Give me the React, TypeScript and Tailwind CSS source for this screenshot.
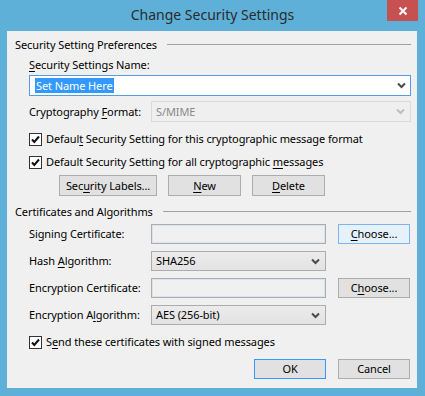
import type { ReactNode } from "react";

const font = { fontFamily: '"Noto Sans", "Segoe UI", sans-serif' };

function U({ children }: { children: ReactNode }) {
  return <span className="underline underline-offset-2">{children}</span>;
}

function Chevron({ disabled }: { disabled?: boolean }) {
  return (
    <svg width="9" height="7" viewBox="0 0 9 7" className="shrink-0">
      <path
        d="M1 1.5 L4.5 5 L8 1.5"
        fill="none"
        stroke={disabled ? "#bdbdbd" : "#4a4a4a"}
        strokeWidth="2"
      />
    </svg>
  );
}

function CheckBox() {
  return (
    <span className="flex h-[13px] w-[13px] shrink-0 items-center justify-center border border-[#333] bg-white">
      <svg width="11" height="11" viewBox="0 0 11 11">
        <path d="M2 5.5 L4.3 8 L9 2.5" fill="none" stroke="#111" strokeWidth="2" />
      </svg>
    </span>
  );
}

function Btn({ children, w, variant }: { children: ReactNode; w: string; variant?: "hot" | "default" }) {
  const look =
    variant === "hot"
      ? "border-[#7eb4ea] bg-[#e5f1fb]"
      : variant === "default"
        ? "border-[#3399ff] bg-[#e1e1e1]"
        : "border-[#adadad] bg-[#e1e1e1]";
  return (
    <div className={`flex h-full items-center justify-center whitespace-nowrap border text-black ${look} ${w}`}>
      {children}
    </div>
  );
}

function GroupHead({ title }: { title: string }) {
  return (
    <div className="flex h-4 items-center pl-2 pr-[6px]">
      <span className="shrink-0 whitespace-nowrap text-black">{title}</span>
      <div className="ml-[10px] mt-[-2px] h-px flex-1 bg-[#a0a0a0]" />
    </div>
  );
}

function Field({ label, children }: { label: ReactNode; children: ReactNode }) {
  return (
    <div className="flex h-full items-center">
      <span className="w-[122px] shrink-0 whitespace-nowrap text-black">{label}</span>
      {children}
    </div>
  );
}

function TextBox() {
  return <div className="h-full w-[175px] border border-[#adadad] bg-[#f0f0f0] shadow-[inset_0_0_0_1px_#d6e3f0]" />;
}

function Combo({ value }: { value: string }) {
  return (
    <div className="flex h-full w-[175px] items-center justify-between border border-[#acacac] bg-gradient-to-b from-[#ececec] to-[#e3e3e3] pl-[4px] pr-[5px] text-black">
      <span>{value}</span>
      <Chevron />
    </div>
  );
}

export default function App() {
  return (
    <div
      className="flex h-[396px] w-[425px] flex-col bg-[#5fb0d8] text-[11px] leading-4 tracking-[-0.1px]"
      style={font}
    >
      {/* title bar */}
      <div className="relative flex h-[31px] shrink-0 items-center justify-center">
        <span className="mt-[-1px] text-[14px] tracking-normal text-[#2b2b2b]">Change Security Settings</span>
        <div className="absolute right-[7px] top-0 flex h-[21px] w-[31px] items-center justify-center bg-[#c75050]">
          <svg width="10" height="10" viewBox="0 0 10 10">
            <path d="M1.5 1.5 L8.5 8.5 M8.5 1.5 L1.5 8.5" stroke="#fff" strokeWidth="2" />
          </svg>
        </div>
      </div>

      {/* client area */}
      <div className="mb-[8px] ml-[7px] mr-[8px] flex flex-1 flex-col bg-[#f0f0f0] pt-[6px]">
        <GroupHead title="Security Setting Preferences" />

        <div className="mt-1 h-4 pl-[22px] text-black">
          <U>S</U>ecurity Settings Name:
        </div>

        <div className="ml-[22px] mr-[6px] mt-[2px] flex h-[21px] items-center justify-between border border-[#569de5] bg-white pl-[5px] pr-[4px]">
          <span className="bg-[#3399ff] px-px leading-[15px] text-white">Set Name Here</span>
          <Chevron />
        </div>

        <div className="mt-[5px] h-[21px] pl-[22px] pr-[6px]">
          <Field
            label={
              <>
                Cryptography <U>F</U>ormat:
              </>
            }
          >
            <div className="flex h-full flex-1 items-center justify-between border border-[#d9d9d9] bg-[#efefef] pl-[4px] pr-[5px] text-[#8a8a8a]">
              <span>S/MIME</span>
              <Chevron disabled />
            </div>
          </Field>
        </div>

        <div className="mt-[9px] flex h-4 items-center gap-[4px] pl-[22px] text-black">
          <CheckBox />
          <span>
            Defaul<U>t</U> Security Setting for this cryptographic message format
          </span>
        </div>

        <div className="mt-[7px] flex h-4 items-center gap-[4px] pl-[22px] text-black">
          <CheckBox />
          <span>
            Default Security Setting for all cryptographic <U>m</U>essages
          </span>
        </div>

        <div className="mt-[5px] flex h-[21px] gap-[11px] pl-[52px]">
          <Btn w="w-[98px]">
            Sec<U>u</U>rity Labels...
          </Btn>
          <Btn w="w-[73px]">
            <U>N</U>ew
          </Btn>
          <Btn w="w-[73px]">
            <U>D</U>elete
          </Btn>
        </div>

        <div className="mt-[8px]">
          <GroupHead title="Certificates and Algorithms" />
        </div>

        <div className="mt-1 flex h-5 justify-between pl-[22px] pr-[7px]">
          <Field label="Signing Certificate:">
            <TextBox />
          </Field>
          <Btn w="w-[72px]" variant="hot">
            <U>C</U>hoose...
          </Btn>
        </div>

        <div className="mt-[7px] h-5 pl-[22px]">
          <Field
            label={
              <>
                Hash <U>A</U>lgorithm:
              </>
            }
          >
            <Combo value="SHA256" />
          </Field>
        </div>

        <div className="mt-[7px] flex h-5 justify-between pl-[22px] pr-[7px]">
          <Field label="Encryption Certificate:">
            <TextBox />
          </Field>
          <Btn w="w-[72px]">
            C<U>h</U>oose...
          </Btn>
        </div>

        <div className="mt-[7px] h-5 pl-[22px]">
          <Field
            label={
              <>
                Encryption A<U>l</U>gorithm:
              </>
            }
          >
            <Combo value="AES (256-bit)" />
          </Field>
        </div>

        <div className="mt-[9px] flex h-4 items-center gap-[4px] pl-[22px] text-black">
          <CheckBox />
          <span>
            S<U>e</U>nd these certificates with signed messages
          </span>
        </div>

        <div className="mt-[9px] flex h-5 justify-end gap-[12px] pr-[7px]">
          <Btn w="w-[72px]" variant="default">
            OK
          </Btn>
          <Btn w="w-[72px]">Cancel</Btn>
        </div>
      </div>
    </div>
  );
}
